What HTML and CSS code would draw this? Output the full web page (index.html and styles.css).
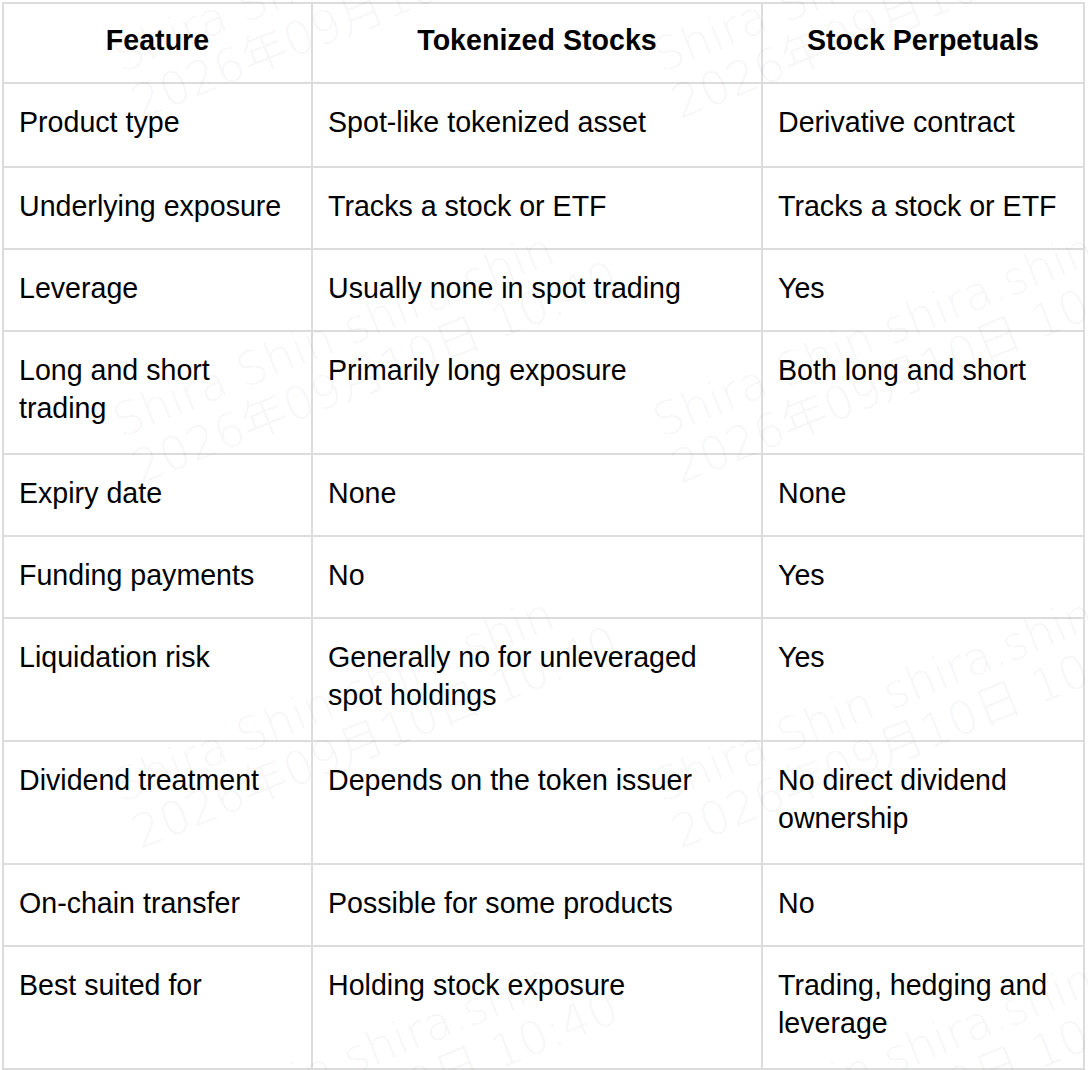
FILE: index.html
```html
<!DOCTYPE html>
<html lang="en">
<head>
<meta charset="utf-8">
<title>Tokenized Stocks vs Stock Perpetuals</title>
<link rel="stylesheet" href="styles.css">
</head>
<body>
<div class="sheet">
  <div class="table" role="table">
    <div class="row head" role="row">
      <div class="cell" role="columnheader">Feature</div>
      <div class="cell" role="columnheader">Tokenized Stocks</div>
      <div class="cell" role="columnheader">Stock Perpetuals</div>
    </div>
    <div class="row" role="row">
      <div class="cell" role="cell">Product type</div>
      <div class="cell" role="cell">Spot-like tokenized asset</div>
      <div class="cell" role="cell">Derivative contract</div>
    </div>
    <div class="row" role="row">
      <div class="cell" role="cell">Underlying exposure</div>
      <div class="cell" role="cell">Tracks a stock or ETF</div>
      <div class="cell" role="cell">Tracks a stock or ETF</div>
    </div>
    <div class="row" role="row">
      <div class="cell" role="cell">Leverage</div>
      <div class="cell" role="cell">Usually none in spot trading</div>
      <div class="cell" role="cell">Yes</div>
    </div>
    <div class="row two" role="row">
      <div class="cell" role="cell">Long and short trading</div>
      <div class="cell" role="cell">Primarily long exposure</div>
      <div class="cell" role="cell">Both long and short</div>
    </div>
    <div class="row" role="row">
      <div class="cell" role="cell">Expiry date</div>
      <div class="cell" role="cell">None</div>
      <div class="cell" role="cell">None</div>
    </div>
    <div class="row" role="row">
      <div class="cell" role="cell">Funding payments</div>
      <div class="cell" role="cell">No</div>
      <div class="cell" role="cell">Yes</div>
    </div>
    <div class="row two" role="row">
      <div class="cell" role="cell">Liquidation risk</div>
      <div class="cell" role="cell">Generally no for unleveraged spot holdings</div>
      <div class="cell" role="cell">Yes</div>
    </div>
    <div class="row two" role="row">
      <div class="cell" role="cell">Dividend treatment</div>
      <div class="cell" role="cell">Depends on the token issuer</div>
      <div class="cell" role="cell">No direct dividend ownership</div>
    </div>
    <div class="row" role="row">
      <div class="cell" role="cell">On-chain transfer</div>
      <div class="cell" role="cell">Possible for some products</div>
      <div class="cell" role="cell">No</div>
    </div>
    <div class="row two" role="row">
      <div class="cell" role="cell">Best suited for</div>
      <div class="cell" role="cell">Holding stock exposure</div>
      <div class="cell" role="cell">Trading, hedging and leverage</div>
    </div>
  </div>

  <div class="watermark" aria-hidden="true">
    <div class="tile"><div class="wm">Shira Shin shira.shin<br>2026年09月10日 10:40</div></div>
    <div class="tile"><div class="wm">Shira Shin shira.shin<br>2026年09月10日 10:40</div></div>
    <div class="tile"><div class="wm">Shira Shin shira.shin<br>2026年09月10日 10:40</div></div>
    <div class="tile"><div class="wm">Shira Shin shira.shin<br>2026年09月10日 10:40</div></div>
    <div class="tile"><div class="wm">Shira Shin shira.shin<br>2026年09月10日 10:40</div></div>
    <div class="tile"><div class="wm">Shira Shin shira.shin<br>2026年09月10日 10:40</div></div>
    <div class="tile"><div class="wm">Shira Shin shira.shin<br>2026年09月10日 10:40</div></div>
    <div class="tile"><div class="wm">Shira Shin shira.shin<br>2026年09月10日 10:40</div></div>
  </div>
</div>
</body>
</html>
```

FILE: styles.css
```css
html, body {
  margin: 0;
  padding: 0;
  background: #ffffff;
}

.sheet {
  position: relative;
  width: 1088px;
  height: 1070px;
  overflow: hidden;
  padding: 2px 0 0 2px;
  box-sizing: border-box;
  font-family: "Liberation Sans", Arial, sans-serif;
  color: #000000;
}

.table {
  display: flex;
  flex-direction: column;
  width: max-content;
  border-top: 2px solid #dcdcdc;
  border-left: 2px solid #dcdcdc;
}

.row {
  display: grid;
  grid-template-columns: 309px 450px 322px;
}

.cell {
  box-sizing: border-box;
  border-right: 2px solid #dcdcdc;
  border-bottom: 2px solid #dcdcdc;
  padding: 19px 15px 23px 15px;
  font-size: 28.6px;
  line-height: 38px;
}

.row.two .cell {
  padding-bottom: 26px;
}

.row.head .cell {
  font-weight: 700;
  text-align: center;
  padding-top: 17px;
  padding-bottom: 23px;
}

.row.head + .row .cell {
  padding-bottom: 25px;
}

/* faint diagonal watermark lying over the table */
.watermark {
  position: absolute;
  left: 0;
  top: 35px;
  display: grid;
  grid-template-columns: 540px 540px;
  grid-auto-rows: 365px;
  pointer-events: none;
}

.tile {
  padding-left: 106px;
}

.wm {
  display: inline-block;
  transform: rotate(-22deg);
  transform-origin: 0 0;
  white-space: nowrap;
  font-family: "DejaVu Sans", "Noto Sans CJK SC", sans-serif;
  font-weight: 200;
  font-size: 46px;
  line-height: 50px;
  color: rgba(0, 0, 0, 0.05);
}
```
